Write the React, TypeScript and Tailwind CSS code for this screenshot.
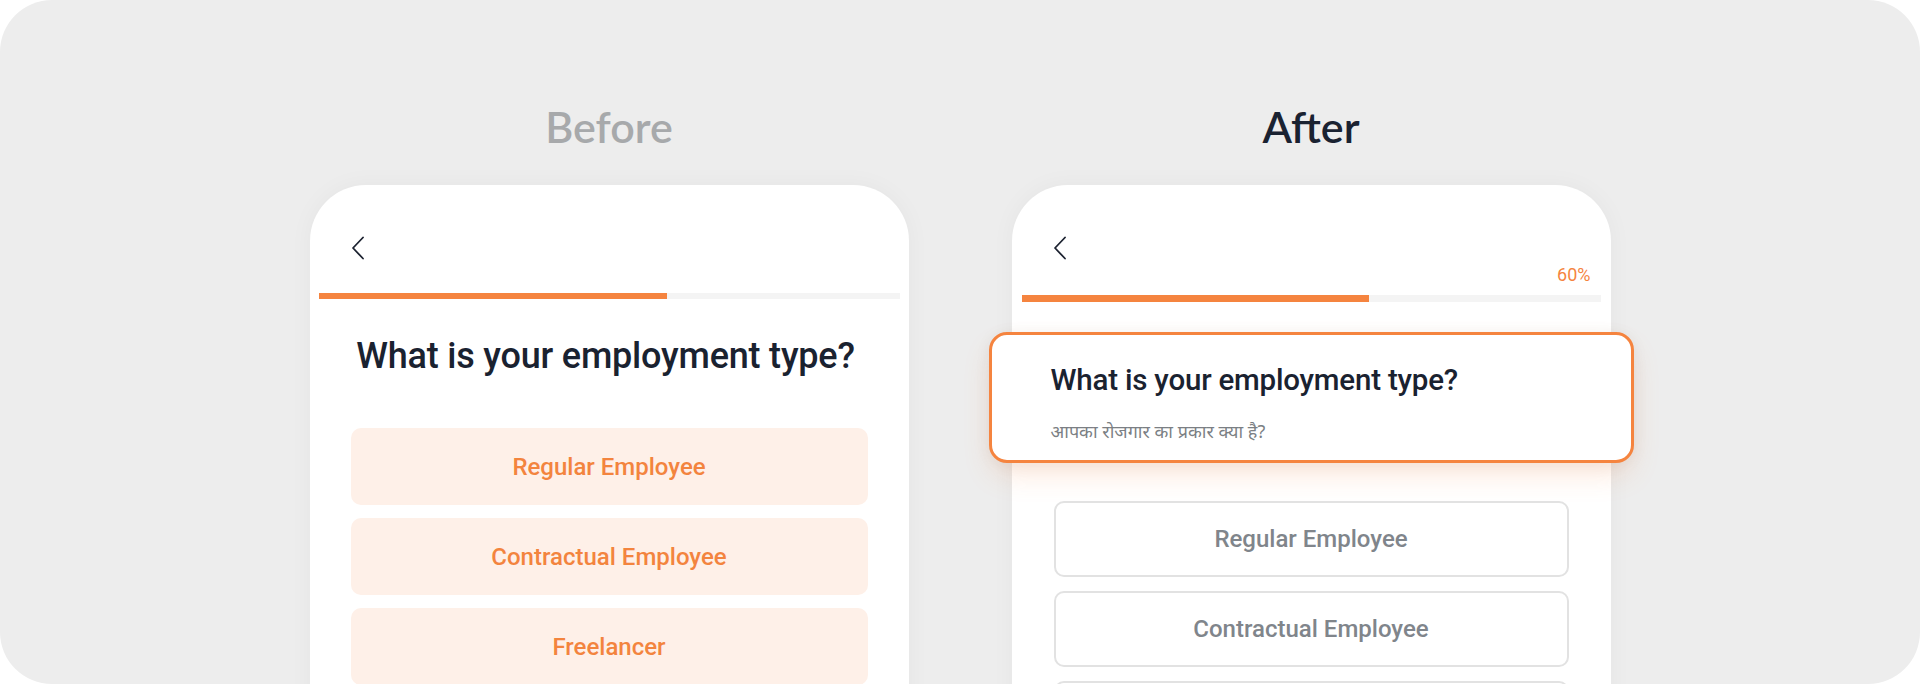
import React from "react";

const Chevron = () => (
  <svg width="14" height="24" viewBox="0 0 14 24" fill="none">
    <path d="M12 1.5 L2 12 L12 22.5" stroke="#1c2230" strokeWidth="1.8" strokeLinecap="round" strokeLinejoin="round" />
  </svg>
);

const roboto = { fontFamily: "Roboto, 'Noto Sans', sans-serif" };

function BeforePhone() {
  const opts = ["Regular Employee", "Contractual Employee", "Freelancer"];
  return (
    <div className="w-[599px] h-[560px] bg-white rounded-t-[56px] shadow-[0_0_24px_rgba(0,0,0,0.04)] flex flex-col" style={roboto}>
      <div className="shrink-0 mt-[51px] ml-[41px] h-[24px]">
        <Chevron />
      </div>
      <div className="shrink-0 mt-[33px] mx-[9px] h-[6px] bg-[#f4f4f4] flex">
        <div className="w-[60%] h-full bg-[#f5843f]" />
      </div>
      <h2 className="shrink-0 mt-[39px] pr-[7px] text-center text-[36px] leading-none font-medium text-[#1a2230] tracking-[-0.2px]">
        What is your employment type?
      </h2>
      <div className="shrink-0 mt-[54px] mx-[41px] flex flex-col gap-[13px]">
        {opts.map((o) => (
          <div key={o} className="shrink-0 h-[77px] rounded-[10px] bg-[#fef0e8] flex items-center justify-center text-[24px] font-medium text-[#f3843e]">
            {o}
          </div>
        ))}
      </div>
    </div>
  );
}

function AfterPhone() {
  const opts = ["Regular Employee", "Contractual Employee", "Freelancer"];
  return (
    <div className="w-[599px] h-[560px] bg-white rounded-t-[56px] shadow-[0_0_24px_rgba(0,0,0,0.04)] flex flex-col" style={roboto}>
      <div className="shrink-0 mt-[51px] ml-[41px] h-[24px]">
        <Chevron />
      </div>
      <div className="shrink-0 mt-[6px] pr-[20px] text-right text-[18px] leading-[18px] text-[#f5843f]">60%</div>
      <div className="shrink-0 mt-[11px] mx-[10px] h-[7px] bg-[#f4f4f4] flex">
        <div className="w-[60%] h-full bg-[#f5843f]" />
      </div>
      <div className="shrink-0 mt-[30px] -mx-[23px] h-[131px] rounded-[18px] border-[3px] border-[#f5843f] bg-white pl-[59px] pt-[31px] shadow-[0_14px_30px_-4px_rgba(245,130,60,0.2),0_2px_16px_rgba(0,0,0,0.06)]">
        <div className="text-[29.5px] leading-none font-medium text-[#1a2230] tracking-[-0.2px]">What is your employment type?</div>
        <div className="mt-[24px] text-[18px] leading-[22px] text-[#7b7f84]" style={{ fontFamily: "'Noto Sans', Roboto, sans-serif" }}>
          आपका रोजगार का प्रकार क्या है?
        </div>
      </div>
      <div className="shrink-0 mt-[38px] mx-[42px] flex flex-col gap-[14px]">
        {opts.map((o) => (
          <div key={o} className="shrink-0 h-[76px] rounded-[10px] border-2 border-[#e2e2e2] bg-white flex items-center justify-center text-[24px] font-medium text-[#80858b]">
            {o}
          </div>
        ))}
      </div>
    </div>
  );
}

export default function App() {
  return (
    <div className="w-[1920px] h-[684px] bg-white">
      <div className="w-full h-full bg-[#ededed] rounded-[52px] overflow-hidden flex justify-center gap-[103px]">
        <div className="w-[599px] flex flex-col items-center">
          <div className="shrink-0 mt-[105px] h-[42px] text-[43px] leading-none font-semibold text-[#a7a9ab]" style={{ fontFamily: "Lato, 'Open Sans', sans-serif" }}>
            Before
          </div>
          <div className="shrink-0 mt-[38px]">
            <BeforePhone />
          </div>
        </div>
        <div className="w-[599px] flex flex-col items-center">
          <div className="shrink-0 mt-[105px] h-[42px] text-[43px] leading-none font-semibold text-[#1a2231]" style={{ fontFamily: "Lato, 'Open Sans', sans-serif" }}>
            After
          </div>
          <div className="shrink-0 mt-[38px]">
            <AfterPhone />
          </div>
        </div>
      </div>
    </div>
  );
}
